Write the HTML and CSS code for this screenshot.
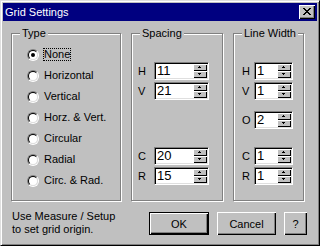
FILE: index.html
```html
<!DOCTYPE html>
<html lang="en">
<head>
  <meta charset="UTF-8">
  <title>Grid Settings</title>
  <link rel="stylesheet" href="styles.css">
</head>
<body>

  <div class="window">
    <div class="titlebar">
      <span class="title">Grid Settings</span>
      <div class="close-btn">
        <svg width="8" height="7" viewBox="0 0 8 7" shape-rendering="crispEdges">
          <path d="M0 0h2v1h-2zM6 0h2v1h-2zM1 1h2v1h-2zM5 1h2v1h-2zM2 2h4v1h-4zM3 3h2v1h-2zM2 4h4v1h-4zM1 5h2v1h-2zM5 5h2v1h-2zM0 6h2v1h-2zM6 6h2v1h-2z" fill="#000"/>
        </svg>
      </div>
    </div>

    <div class="client">
      <div class="groups">

        <div class="group group-type">
          <span class="group-title">Type</span>
          <div class="radio-row"><span class="radio checked"></span><span class="radio-label focus">None</span></div>
          <div class="radio-row"><span class="radio"></span><span class="radio-label">Horizontal</span></div>
          <div class="radio-row"><span class="radio"></span><span class="radio-label">Vertical</span></div>
          <div class="radio-row"><span class="radio"></span><span class="radio-label">Horz. &amp; Vert.</span></div>
          <div class="radio-row"><span class="radio"></span><span class="radio-label">Circular</span></div>
          <div class="radio-row"><span class="radio"></span><span class="radio-label">Radial</span></div>
          <div class="radio-row"><span class="radio"></span><span class="radio-label">Circ. &amp; Rad.</span></div>
        </div>

        <div class="group group-spacing">
          <span class="group-title">Spacing</span>
          <div class="field-row"><span class="field-label">H</span><div class="edit"><span class="edit-value">11</span><div class="spin"><span class="spin-up"></span><span class="spin-down"></span></div></div></div>
          <div class="field-row mt-2"><span class="field-label">V</span><div class="edit"><span class="edit-value">21</span><div class="spin"><span class="spin-up"></span><span class="spin-down"></span></div></div></div>
          <div class="field-row mt-47"><span class="field-label">C</span><div class="edit"><span class="edit-value">20</span><div class="spin"><span class="spin-up"></span><span class="spin-down"></span></div></div></div>
          <div class="field-row mt-2"><span class="field-label">R</span><div class="edit"><span class="edit-value">15</span><div class="spin"><span class="spin-up"></span><span class="spin-down"></span></div></div></div>
        </div>

        <div class="group group-width">
          <span class="group-title">Line Width</span>
          <div class="field-row"><span class="field-label">H</span><div class="edit"><span class="edit-value">1</span><div class="spin"><span class="spin-up"></span><span class="spin-down"></span></div></div></div>
          <div class="field-row mt-2"><span class="field-label">V</span><div class="edit"><span class="edit-value">1</span><div class="spin"><span class="spin-up"></span><span class="spin-down"></span></div></div></div>
          <div class="field-row mt-11"><span class="field-label">O</span><div class="edit"><span class="edit-value">2</span><div class="spin"><span class="spin-up"></span><span class="spin-down"></span></div></div></div>
          <div class="field-row mt-18"><span class="field-label">C</span><div class="edit"><span class="edit-value">1</span><div class="spin"><span class="spin-up"></span><span class="spin-down"></span></div></div></div>
          <div class="field-row mt-2"><span class="field-label">R</span><div class="edit"><span class="edit-value">1</span><div class="spin"><span class="spin-up"></span><span class="spin-down"></span></div></div></div>
        </div>

      </div>

      <div class="bottom-row">
        <div class="hint">Use Measure / Setup<br>to set grid origin.</div>
        <div class="buttons">
          <button class="btn btn-default">OK</button>
          <button class="btn">Cancel</button>
          <button class="btn btn-help">?</button>
        </div>
      </div>
    </div>
  </div>

</body>
</html>
```

FILE: styles.css
```css
body {
  margin: 0;
  padding: 0;
  font-family: "Liberation Sans", Arial, sans-serif;
  font-size: 11px;
  color: #000;
  background: #c0c0c0;
}

.window {
  width: 320px;
  height: 246px;
  box-sizing: border-box;
  background: #c0c0c0;
  border: 1px solid;
  border-color: #dfdfdf #000 #000 #dfdfdf;
  box-shadow: inset 1px 1px #fff, inset -1px -1px #808080;
  padding: 2px;
}

.titlebar {
  height: 18px;
  background: #000080;
  color: #fff;
  display: flex;
  align-items: center;
  justify-content: space-between;
  padding-left: 2px;
}

.title {
  font-size: 11px;
  line-height: 18px;
}

.close-btn {
  width: 16px;
  height: 14px;
  box-sizing: border-box;
  margin-right: 2px;
  background: #c0c0c0;
  box-shadow: inset 1px 1px #fff, inset -1px -1px #000, inset -2px -2px #808080;
  display: flex;
  align-items: center;
  justify-content: center;
  padding: 0 1px 1px 0;
}

.close-btn svg {
  display: block;
}

.client {
  padding: 12px 10px 0 8px;
}

.groups {
  display: flex;
  gap: 10px;
}

.group {
  position: relative;
  height: 168px;
  box-sizing: border-box;
  border: 1px solid #808080;
  box-shadow: inset 1px 1px #fff, 1px 1px #fff;
}

.group-title {
  position: absolute;
  top: -7px;
  left: 8px;
  padding: 0 2px;
  line-height: 13px;
  background: #c0c0c0;
}

.group-type {
  width: 110px;
  padding: 10px 0 0 15px;
}

.group-spacing {
  width: 92px;
  padding: 28px 0 0 6px;
}

.group-width {
  width: 71px;
  padding: 28px 0 0 8px;
}

/* radio buttons */
.radio-row {
  display: flex;
  align-items: center;
  height: 21px;
}

.radio {
  position: relative;
  width: 12px;
  height: 12px;
  box-sizing: border-box;
  border-radius: 50%;
  border: 1px solid;
  border-color: #808080 #fff #fff #808080;
  margin-right: 5px;
  flex-shrink: 0;
}

.radio::before {
  content: "";
  position: absolute;
  left: 0;
  top: 0;
  width: 10px;
  height: 10px;
  box-sizing: border-box;
  border-radius: 50%;
  border: 1px solid;
  border-color: #000 #dfdfdf #dfdfdf #000;
  background: #fff;
}

.radio.checked::after {
  content: "";
  position: absolute;
  left: 3px;
  top: 3px;
  width: 4px;
  height: 4px;
  border-radius: 50%;
  background: #000;
}

.radio-label {
  line-height: 13px;
  white-space: nowrap;
}

.radio-label.focus {
  border: 1px dotted #000;
  margin-left: -1px;
  line-height: 11px;
}

/* spin edits */
.field-row {
  display: flex;
  align-items: center;
  height: 18px;
}

.mt-2 { margin-top: 2px; }
.mt-11 { margin-top: 11px; }
.mt-18 { margin-top: 18px; }
.mt-47 { margin-top: 47px; }

.field-label {
  width: 16px;
  line-height: 13px;
}

.group-width .field-label {
  width: 12px;
}

.edit {
  width: 55px;
  height: 18px;
  box-sizing: border-box;
  border: 1px solid;
  border-color: #808080 #fff #fff #808080;
  box-shadow: inset 1px 1px #000, inset -1px -1px #dfdfdf;
  background: #fff;
  display: flex;
  padding: 1px;
}

.group-width .edit {
  width: 39px;
}

.edit-value {
  flex: 1;
  font-size: 13px;
  line-height: 14px;
  padding-left: 1px;
}

.spin {
  width: 14px;
  display: flex;
  flex-direction: column;
}

.spin-up, .spin-down {
  position: relative;
  height: 7px;
  background: #c0c0c0;
  box-shadow: inset 1px 1px #fff, inset -1px -1px #000;
}

.spin-up::after, .spin-down::after {
  content: "";
  position: absolute;
  left: 6px;
  width: 1px;
  height: 1px;
  background: #000;
}

.spin-up::after {
  top: 2px;
  box-shadow: -1px 1px #000, 0 1px #000, 1px 1px #000;
}

.spin-down::after {
  top: 3px;
  box-shadow: -1px -1px #000, 0 -1px #000, 1px -1px #000;
}

/* bottom */
.bottom-row {
  display: flex;
  align-items: flex-start;
  margin-top: 9px;
}

.hint {
  flex: 1;
  line-height: 13px;
  padding-left: 1px;
}

.buttons {
  display: flex;
  gap: 8px;
  margin-top: 2px;
}

.btn {
  width: 59px;
  height: 23px;
  box-sizing: border-box;
  margin: 0;
  padding: 0;
  border: none;
  background: #c0c0c0;
  font-family: "Liberation Sans", Arial, sans-serif;
  font-size: 11px;
  color: #000;
  box-shadow: inset 1px 1px #fff, inset -1px -1px #000, inset -2px -2px #808080;
}

.btn-default {
  width: 60px;
  border: 1px solid #000;
}

.btn-help {
  width: 23px;
}
```
